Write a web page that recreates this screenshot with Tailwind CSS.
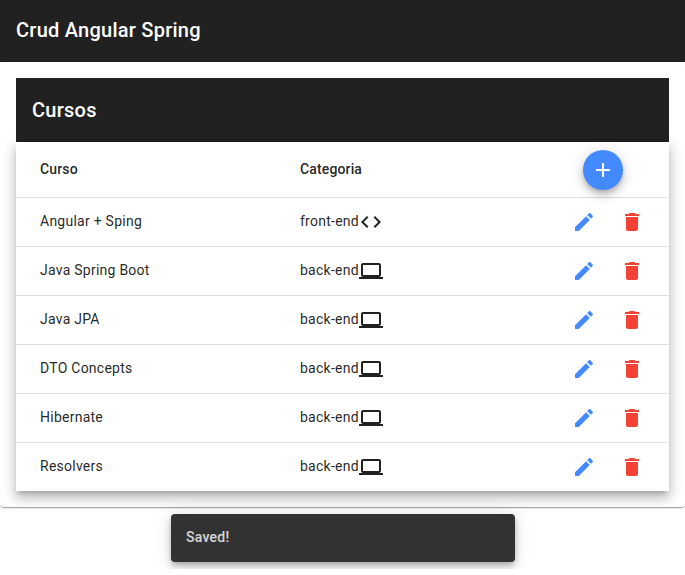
<!DOCTYPE html>
<html lang="pt">
<head>
<meta charset="utf-8">
<title>Crud Angular Spring</title>
<script src="https://cdn.jsdelivr.net/npm/@tailwindcss/browser@4"></script>
</head>
<body class="bg-white font-['Roboto',sans-serif] text-black/87">
<svg class="hidden">
  <symbol id="edit" viewBox="0 0 24 24"><path d="M3 17.25V21h3.75L17.81 9.94l-3.75-3.75L3 17.25zM20.71 7.04c.39-.39.39-1.02 0-1.41l-2.34-2.34c-.39-.39-1.02-.39-1.41 0l-1.83 1.83 3.75 3.75 1.83-1.83z"/></symbol>
  <symbol id="delete" viewBox="0 0 24 24"><path d="M6 19c0 1.1.9 2 2 2h8c1.1 0 2-.9 2-2V7H6v12zM19 4h-3.5l-1-1h-5l-1 1H5v2h14V4z"/></symbol>
  <symbol id="laptop" viewBox="0 0 24 24"><path d="M20 18c1.1 0 1.99-.9 1.99-2L22 6c0-1.1-.9-2-2-2H4c-1.1 0-2 .9-2 2v10c0 1.1.9 2 2 2H0v2h24v-2h-4zM4 6h16v10H4V6z"/></symbol>
  <symbol id="code" viewBox="0 0 24 24"><path d="M9.4 16.6L4.8 12l4.6-4.6L8 6l-6 6 6 6 1.4-1.4zm5.2 0l4.6-4.6-4.6-4.6L16 6l6 6-6 6-1.4-1.4z"/></symbol>
</svg>
<div class="relative h-[569px] overflow-hidden">
  <header class="flex h-[62px] items-center bg-[#212121] px-4 pb-0.5 text-xl font-medium tracking-[0.25px] text-white">Crud Angular Spring</header>
  <main class="h-[445px] rounded bg-white p-4 shadow-[0_2px_1px_-1px_rgba(0,0,0,0.2),0_1px_1px_0_rgba(0,0,0,0.14),0_1px_3px_0_rgba(0,0,0,0.12)]">
    <div class="flex h-16 items-center bg-[#212121] px-4 text-xl font-medium tracking-[0.25px] text-white">Cursos</div>
    <div class="bg-white text-sm tracking-[0.25px] shadow-[0_5px_5px_-3px_rgba(0,0,0,0.2),0_8px_10px_1px_rgba(0,0,0,0.14),0_3px_14px_2px_rgba(0,0,0,0.12)]">
      <div class="grid h-14 grid-cols-[260px_260px_1fr] items-center border-b border-black/12 pl-6 font-medium tracking-[0.14px]">
        <span class="pb-0.5">Curso</span><span class="pb-0.5">Categoria</span>
        <button class="ml-[23px] flex size-10 items-center justify-center rounded-full bg-[#448aff] shadow-[0_3px_5px_-1px_rgba(0,0,0,0.2),0_6px_10px_0_rgba(0,0,0,0.14),0_1px_18px_0_rgba(0,0,0,0.12)]">
          <svg class="size-6 fill-white" viewBox="0 0 24 24"><path d="M19 13h-6v6h-2v-6H5v-2h6V5h2v6h6v2z"/></svg>
        </button>
      </div>
      <div id="rows"></div>
    </div>
  </main>
  <div class="absolute left-[171px] top-[514px] flex h-12 w-[344px] items-center rounded bg-[#323232] px-[15px] pb-0.5 text-sm font-medium tracking-[0.25px] text-white/80 shadow-[0_3px_5px_-1px_rgba(0,0,0,0.2),0_6px_10px_0_rgba(0,0,0,0.14),0_1px_18px_0_rgba(0,0,0,0.12)]">Saved!</div>
</div>
<script>
const courses = [
  ['Angular + Sping', 'front-end', 'code'],
  ['Java Spring Boot', 'back-end', 'laptop'],
  ['Java JPA', 'back-end', 'laptop'],
  ['DTO Concepts', 'back-end', 'laptop'],
  ['Hibernate', 'back-end', 'laptop'],
  ['Resolvers', 'back-end', 'laptop'],
];
document.getElementById('rows').innerHTML = courses.map(([name, category, icon]) => `
  <div class="grid h-[49px] grid-cols-[260px_260px_1fr] items-center border-b border-black/12 pl-6 last:h-12 last:border-b-0">
    <span class="pb-0.5">${name}</span>
    <span class="flex items-center"><span class="w-[59px] pb-0.5 whitespace-nowrap">${category}</span><svg class="size-6 fill-black/87"><use href="#${icon}"/></svg></span>
    <span class="flex">
      <button class="flex size-12 items-center justify-center"><svg class="size-6 fill-[#448aff]"><use href="#edit"/></svg></button>
      <button class="flex size-12 items-center justify-center"><svg class="size-6 fill-[#f44336]"><use href="#delete"/></svg></button>
    </span>
  </div>`).join('');
</script>
</body>
</html>
